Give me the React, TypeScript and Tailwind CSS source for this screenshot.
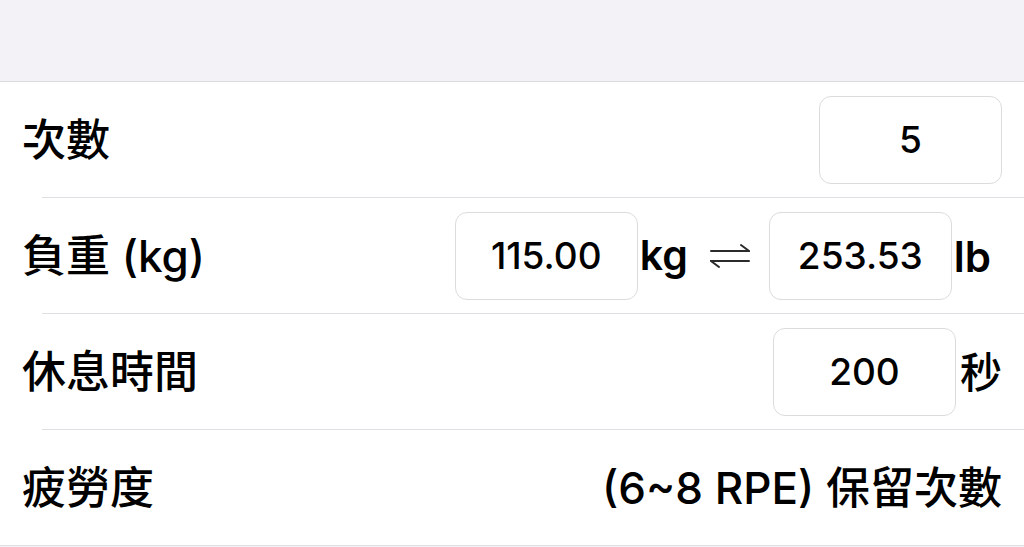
import React from 'react';

const FONT = { fontFamily: 'Inter, "Noto Sans CJK TC", sans-serif' } as const;

/** 輸入框 */
const Field = ({ value }: { value: string }) => (
  <div className="w-[183px] h-[88px] flex items-center justify-center rounded-[12px] border border-[#dcdcdf] bg-white text-[37px] font-medium text-black">
    {value}
  </div>
);

/** 換算箭頭 ⇌ */
const Harpoons = () => (
  <svg width="40" height="28" viewBox="0 0 40 28" fill="none" stroke="#2b2b2b" strokeWidth="2" strokeLinecap="round">
    <path d="M1 9 H39 L31 3" />
    <path d="M39 19 H1 L9 25" />
  </svg>
);

const Row = ({
  label,
  children,
  inset = true,
}: {
  label: string;
  children: React.ReactNode;
  inset?: boolean;
}) => (
  <div className="relative h-[116px] flex items-center justify-between pl-[22px] pr-[22px]">
    <span className="text-[44px] font-medium text-black leading-none">{label}</span>
    <div className="flex items-center">{children}</div>
    <div className={`absolute bottom-0 right-0 h-px bg-[#e0e0e4] ${inset ? 'left-[42px]' : 'left-0'}`} />
  </div>
);

export default function App() {
  return (
    <div className="w-[1024px] h-[547px] overflow-hidden bg-[#f2f2f7]" style={FONT}>
      <div className="h-[82px] border-b border-[#d9d9de]" />
      <div className="bg-white">
        <Row label="次數">
          <Field value="5" />
        </Row>
        <Row label="負重 (kg)">
          <Field value="115.00" />
          <span className="ml-[2px] text-[41px] font-semibold text-black">kg</span>
          <span className="ml-[22px] mr-[19px] flex items-center">
            <Harpoons />
          </span>
          <Field value="253.53" />
          <span className="ml-[2px] mr-[11px] text-[42px] font-semibold text-black">lb</span>
        </Row>
        <Row label="休息時間">
          <Field value="200" />
          <span className="ml-[4px] text-[42px] font-medium text-black">秒</span>
        </Row>
        <Row label="疲勞度" inset={false}>
          <span className="text-[44px] font-medium text-black">(6~8 RPE) 保留次數</span>
        </Row>
      </div>
    </div>
  );
}
